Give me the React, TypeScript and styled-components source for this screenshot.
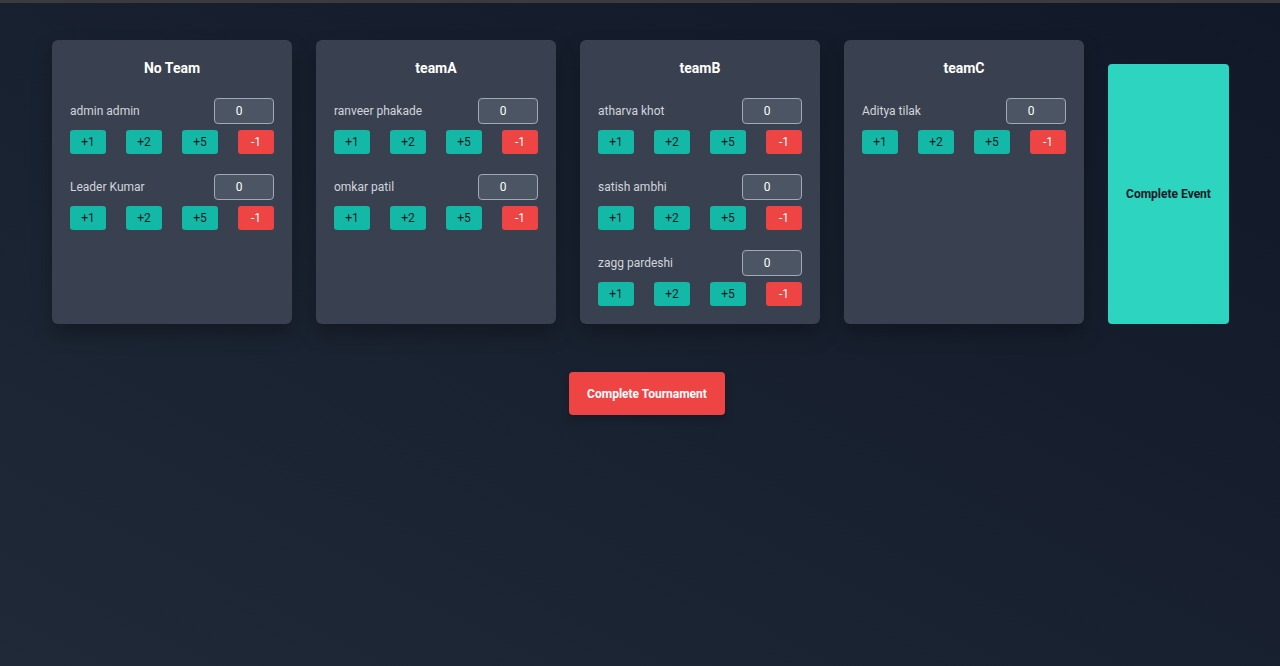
import React from 'react';
import styled, { createGlobalStyle } from 'styled-components';

const GlobalStyle = createGlobalStyle`
html, body {
  margin: 0;
  padding: 0;
}
body {
  font-family: Roboto, 'Liberation Sans', sans-serif;
  background: #111827;
}
`

const Page = styled.div`
min-height: 666px;
box-sizing: border-box;
border-top: 3px solid #3a3b3f;
background: linear-gradient(to bottom left, #111827, #1f2937);
display: flex;
flex-direction: column;
align-items: center;
padding-top: 37px;
`

const Row = styled.div`
display: flex;
flex-direction: row;
gap: 24px;
padding-left: 1px;
`

const Card = styled.div`
width: 240px;
height: 284px;
box-sizing: border-box;
padding: 18px 18px;
background-color: #394150;
border-radius: 6px;
box-shadow: 0 10px 20px rgba(0, 0, 0, 0.25);
`

const Title = styled.h2`
margin: 0 0 20px 0;
font-size: 14px;
line-height: 20px;
font-weight: 700;
text-align: center;
color: #ffffff;
`

const Player = styled.div`
margin-bottom: 20px;
`

const NameRow = styled.div`
display: flex;
align-items: center;
justify-content: space-between;
`

const Name = styled.span`
font-size: 12px;
color: #d1d5db;
`

const Score = styled.input`
width: 60px;
height: 26px;
box-sizing: border-box;
padding: 0 10px 0 0;
border: 1px solid #a3a9b3;
border-radius: 4px;
background-color: #4b5563;
color: #ffffff;
font-family: Roboto, 'Liberation Sans', sans-serif;
font-size: 12px;
text-align: center;
outline: none;
`

const ButtonRow = styled.div`
display: flex;
justify-content: space-between;
margin-top: 6px;
`

const PointButton = styled.button<{ $minus?: boolean }>`
width: 36px;
height: 24px;
border: none;
border-radius: 3px;
background-color: ${p => (p.$minus ? '#ef4444' : '#14b8a6')};
color: ${p => (p.$minus ? '#ffffff' : '#111827')};
font-family: Roboto, 'Liberation Sans', sans-serif;
font-size: 12px;
cursor: pointer;
`

const EventButton = styled.button`
width: 121px;
margin-top: 24px;
border: none;
border-radius: 4px;
background-color: #2dd4bf;
color: #111827;
font-family: Roboto, 'Liberation Sans', sans-serif;
font-size: 12px;
font-weight: 700;
cursor: pointer;
`

const TournamentButton = styled.button`
margin-top: 48px;
margin-left: 14px;
width: 156px;
height: 43px;
border: none;
border-radius: 4px;
background-color: #ef4444;
color: #ffffff;
font-family: Roboto, 'Liberation Sans', sans-serif;
font-size: 12px;
font-weight: 700;
box-shadow: 0 4px 8px rgba(0, 0, 0, 0.2);
cursor: pointer;
`

const teams = [
  { name: 'No Team', players: ['admin admin', 'Leader Kumar'] },
  { name: 'teamA', players: ['ranveer phakade', 'omkar patil'] },
  { name: 'teamB', players: ['atharva khot', 'satish ambhi', 'zagg pardeshi'] },
  { name: 'teamC', players: ['Aditya tilak'] },
];

const points = [1, 2, 5, -1];

const App = () => {
  return (
    <Page>
      <GlobalStyle />
      <Row>
        {teams.map(team => (
          <Card key={team.name}>
            <Title>{team.name}</Title>
            {team.players.map(player => (
              <Player key={player}>
                <NameRow>
                  <Name>{player}</Name>
                  <Score type='text' defaultValue='0' />
                </NameRow>
                <ButtonRow>
                  {points.map(pt => (
                    <PointButton key={pt} $minus={pt < 0}>{pt > 0 ? `+${pt}` : pt}</PointButton>
                  ))}
                </ButtonRow>
              </Player>
            ))}
          </Card>
        ))}
        <EventButton>Complete Event</EventButton>
      </Row>
      <TournamentButton>Complete Tournament</TournamentButton>
    </Page>
  );
}

export default App;
